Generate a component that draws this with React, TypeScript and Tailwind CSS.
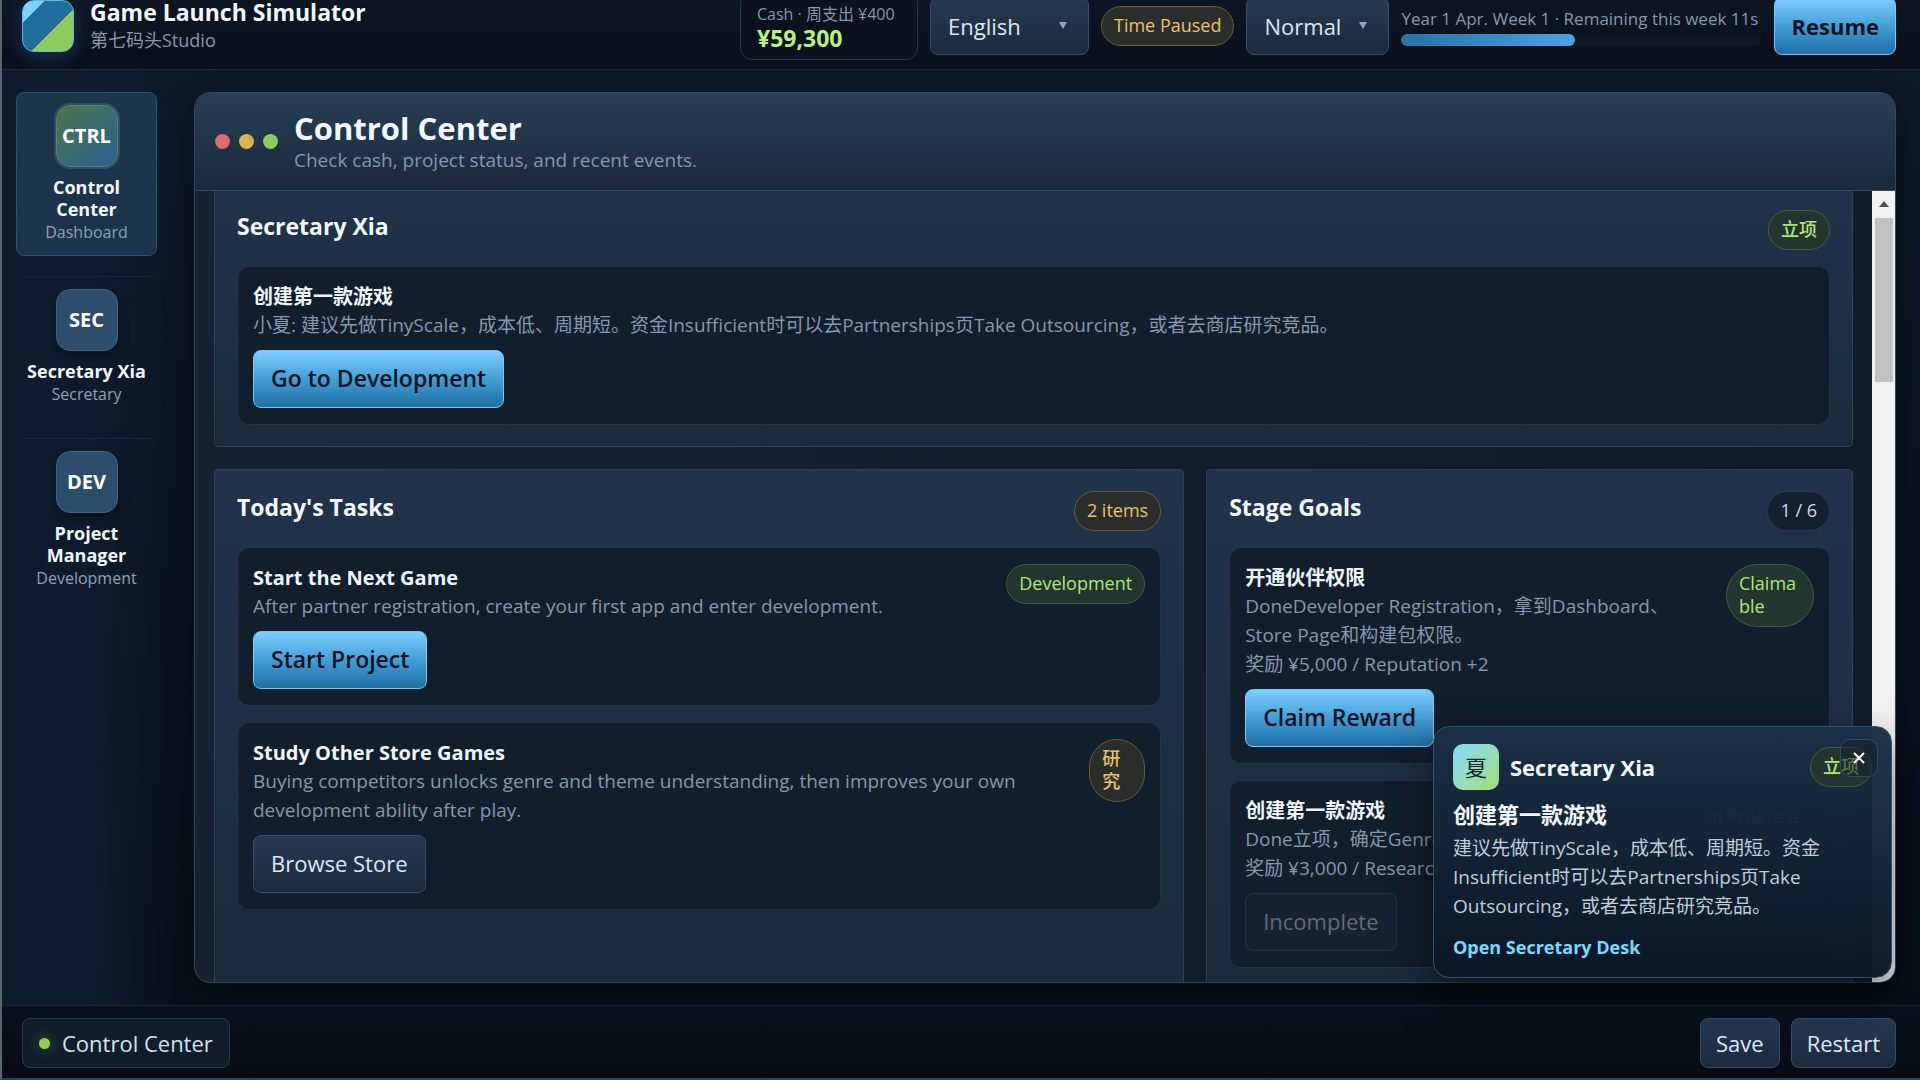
import { useState } from "react"
import type { ReactNode } from "react"
import clsx from "clsx"

type Tone = "green" | "amber" | "plain"

const toneClasses: Record<Tone, string> = {
    green: "border-[#40603f] bg-[#22362f] text-[#b0e67c]",
    amber: "border-[#6b5a37] bg-[#2b2d2b] text-[#e7c46c]",
    plain: "border-[#2c3b4b] bg-[#132030] text-[#cfdbe8]",
}

const navItems = [
    { id: "ctrl", code: "CTRL", title: "Control Center", role: "Dashboard" },
    { id: "sec", code: "SEC", title: "Secretary Xia", role: "Secretary" },
    { id: "dev", code: "DEV", title: "Project Manager", role: "Development" },
]

const darkButton =
    "border border-[#33506b] bg-linear-to-b from-[#273a50] to-[#1b2a3c] text-[#dce8f5]"

const primaryButton =
    "border border-[#7cc6f2] bg-linear-to-b from-[#7dcfff] via-[#429fd6] to-[#1f6fa3] text-[#06121f]"

function Pill({ tone, className, children }: { tone: Tone; className?: string; children: ReactNode }) {
    return (
        <span
            className={clsx(
                "shrink-0 rounded-full border px-3 pt-[7px] pb-2 text-[18px] leading-[23px] font-medium",
                toneClasses[tone],
                className
            )}
        >
            {children}
        </span>
    )
}

function ActionButton({ primary, disabled, children }: { primary?: boolean; disabled?: boolean; children: ReactNode }) {
    return (
        <button
            disabled={disabled}
            className={clsx(
                "mt-[10px] block h-[58px] rounded-lg px-[17px] pb-[2px]",
                primary && primaryButton,
                primary ? "text-[23px] font-semibold" : "text-[22px]",
                !primary && !disabled && darkButton,
                disabled && "border border-[#253443] bg-[#162230] text-[#5f6c7a]"
            )}
        >
            {children}
        </button>
    )
}

function Card({ title, pill, action, children }: { title: string; pill?: ReactNode; action: ReactNode; children: ReactNode }) {
    return (
        <article className="flex items-start justify-between gap-12 rounded-xl border border-[#223343] bg-[#111e2b] px-[15px] py-4">
            <div>
                <h3 className="text-[20px] leading-7 font-bold text-[#eef5fd]">{title}</h3>
                <div className="text-[19px] leading-[29px] text-[#8598ad]">{children}</div>
                {action}
            </div>
            {pill}
        </article>
    )
}

function Panel({ title, pill, children }: { title: string; pill: ReactNode; children: ReactNode }) {
    return (
        <section className="rounded-sm border border-[#2c4157] bg-linear-to-b from-[#20334a] to-[#1b2a3a] px-[22px] py-[21px]">
            <div className="mb-4 flex items-start justify-between">
                <h2 className="text-[23px] leading-8 font-bold text-[#f2f8ff]">{title}</h2>
                {pill}
            </div>
            <div className="space-y-4">{children}</div>
        </section>
    )
}

function HeaderSelect({ label, options, className }: { label: string; options: string[]; className: string }) {
    return (
        <div className={clsx("relative", className)}>
            <select
                aria-label={label}
                className={clsx("h-[58px] w-full appearance-none rounded-lg pl-[17px] text-[22px]", darkButton)}
            >
                {options.map((option) => (
                    <option key={option}>{option}</option>
                ))}
            </select>
            <svg viewBox="0 0 8 7" className="pointer-events-none absolute top-[25px] right-[22px] h-[7px] w-2 fill-[#93a6b9]">
                <path d="M0 0h8L4 7z" />
            </svg>
        </div>
    )
}

function SecretaryPopup({ onClose }: { onClose: () => void }) {
    return (
        <aside className="absolute right-7 bottom-[100px] w-[459px] rounded-2xl border border-[#2c5573] bg-linear-to-b from-[#1a3045]/97 to-[#0a1724]/97 px-[19px] pt-[17px] pb-4 shadow-[0_18px_40px_rgba(0,0,0,0.5)]">
            <div className="flex items-center gap-[11px]">
                <div className="flex size-[46px] items-center justify-center rounded-[10px] bg-linear-to-br from-[#86dcff] to-[#a5dc6d] text-[22px] text-[#0b2233]">
                    夏
                </div>
                <h2 className="flex-1 text-[22px] leading-8 font-bold text-[#f2f8ff]">Secretary Xia</h2>
                <Pill tone="green">立项</Pill>
            </div>
            <button
                aria-label="Close"
                onClick={onClose}
                className="absolute top-3 right-[13px] flex size-[38px] items-center justify-center rounded-[10px] border border-[#34495c] bg-[#14222f]/60 text-white"
            >
                <svg viewBox="0 0 12 12" className="size-3 stroke-current stroke-2">
                    <path d="M1 1l10 10M11 1L1 11" />
                </svg>
            </button>
            <h3 className="mt-2 text-[22px] leading-8 font-bold text-[#f2f8ff]">创建第一款游戏</h3>
            <p className="mt-1 text-[19px] leading-[29px] text-[#c0ceda]">
                建议先做TinyScale，成本低、周期短。资金Insufficient时可以去Partnerships页Take Outsourcing，或者去商店研究竞品。
            </p>
            <a href="#secretary" className="mt-3 inline-block text-[18px] leading-7 font-bold text-[#74dcff]">
                Open Secretary Desk
            </a>
        </aside>
    )
}

export default function App() {
    const [active, setActive] = useState("ctrl")
    const [popupOpen, setPopupOpen] = useState(true)

    return (
        <div className="relative flex h-screen flex-col overflow-hidden border-b-2 border-l-2 border-b-[#24435a] border-l-[#59656f] bg-[#0a1420] font-['Open_Sans','Noto_Sans_CJK_SC',sans-serif]">
            <header className="-mt-4 flex h-[86px] shrink-0 items-center gap-3 border-b border-[#1d2c39] bg-linear-to-b from-[#0d1826] to-[#090f1b] pr-6 pb-px pl-5">
                <div className="size-[52px] shrink-0 rounded-xl border border-[#6fb2dc] bg-[linear-gradient(135deg,#74d7ff_0_22%,#216d9f_22%_59%,#90cc5c_59%)] shadow-[0_4px_18px_rgba(50,120,200,0.35)]" />
                <div className="ml-1 flex-1">
                    <h1 className="text-[23px] leading-7 font-bold text-[#f2f8ff]">Game Launch Simulator</h1>
                    <p className="text-[18px] leading-7 text-[#8598ad]">第七码头Studio</p>
                </div>

                <div className="h-[68px] w-[178px] shrink-0 rounded-xl border border-[#1f3a4f] bg-[#09121e] px-4 pt-[9px]">
                    <p className="text-[16px] leading-6 whitespace-nowrap text-[#8598ad]">Cash · 周支出 ¥400</p>
                    <p className="text-[23px] leading-6 font-bold text-[#b9f27c]">¥59,300</p>
                </div>
                <HeaderSelect label="Language" options={["English", "中文"]} className="w-[159px]" />
                <Pill tone="amber">Time Paused</Pill>
                <HeaderSelect label="Speed" options={["Normal", "Fast"]} className="w-[143px]" />
                <div className="w-[361px]">
                    <p className="text-[17px] leading-6 whitespace-nowrap text-[#8598ad]">
                        Year 1 Apr. Week 1 · Remaining this week 11s
                    </p>
                    <div className="mt-[3px] h-3 rounded-full bg-[#0d1723]">
                        <div className="h-3 rounded-full bg-linear-to-r from-[#2473a6] to-[#4ba3e3]" style={{ width: "48%" }} />
                    </div>
                </div>
                <button className={clsx("h-[58px] rounded-lg px-4 text-[22px] font-bold", primaryButton)}>Resume</button>
            </header>

            <div className="flex min-h-0 flex-1 bg-linear-to-b from-[#0c1926] to-[#07101a]">
                <nav className="w-[174px] shrink-0 bg-linear-to-r from-[#0d1b2c] via-[#0d1b2c] to-transparent py-[22px] pl-[14px]">
                    <div className="flex w-[141px] flex-col gap-5">
                        {navItems.map((item) => (
                            <button
                                key={item.id}
                                onClick={() => setActive(item.id)}
                                className={clsx(
                                    "flex flex-col items-center rounded-lg border py-3",
                                    active === item.id
                                        ? "border-[#2b5570] bg-linear-to-b from-[#1b3549] to-[#1c334c]"
                                        : "border-transparent border-t-[#16263a]"
                                )}
                            >
                                <span
                                    className={clsx(
                                        "flex size-[62px] items-center justify-center rounded-[14px] border text-[20px] font-bold text-white",
                                        active === item.id
                                            ? "border-[#5c8262] bg-linear-to-br from-[#4f7448] to-[#2b5f90] shadow-[0_0_0_2px_#2b4f73]"
                                            : "border-[#44617f] bg-[#2c4d6c] shadow-[0_6px_12px_rgba(0,0,0,0.3)]"
                                    )}
                                >
                                    {item.code}
                                </span>
                                <span className="mt-[9px] px-2 text-[18px] leading-[22px] font-bold text-[#f2f8ff]">{item.title}</span>
                                <span className="mt-px text-[16px] leading-[22px] text-[#8fa2b6]">{item.role}</span>
                            </button>
                        ))}
                    </div>
                </nav>

                <main className="mt-[22px] mr-6 mb-[22px] ml-[18px] flex min-w-0 flex-1 flex-col overflow-hidden rounded-2xl border border-[#34495e] bg-linear-to-r from-[#15222f] to-[#101c28] shadow-[0_10px_30px_rgba(0,0,0,0.4)]">
                    <div className="flex h-[98px] shrink-0 items-center gap-4 border-b border-[#34495e] bg-linear-to-b from-[#293f55] via-[#213448] to-[#1a2938] px-5">
                        <div className="flex gap-[9px]">
                            <span className="size-[15px] rounded-full bg-[#dd6b70]" />
                            <span className="size-[15px] rounded-full bg-[#dbb156]" />
                            <span className="size-[15px] rounded-full bg-[#8fce5a]" />
                        </div>
                        <div>
                            <h1 className="text-[31px] leading-9 font-bold text-[#f2f8ff]">Control Center</h1>
                            <p className="text-[19px] leading-7 text-[#8598ad]">Check cash, project status, and recent events.</p>
                        </div>
                    </div>

                    <div className="flex min-h-0 flex-1 overflow-hidden">
                        <div className="-mt-[3px] flex min-w-0 flex-1 flex-col gap-[22px] px-[19px]">
                            <Panel title="Secretary Xia" pill={<Pill tone="green">立项</Pill>}>
                                <Card title="创建第一款游戏" action={<ActionButton primary>Go to Development</ActionButton>}>
                                    小夏: 建议先做TinyScale，成本低、周期短。资金Insufficient时可以去Partnerships页Take Outsourcing，或者去商店研究竞品。
                                </Card>
                            </Panel>

                            <div className="grid flex-1 grid-cols-[3fr_2fr] gap-[22px]">
                                <Panel title="Today's Tasks" pill={<Pill tone="amber">2 items</Pill>}>
                                    <Card
                                        title="Start the Next Game"
                                        pill={<Pill tone="green">Development</Pill>}
                                        action={<ActionButton primary>Start Project</ActionButton>}
                                    >
                                        After partner registration, create your first app and enter development.
                                    </Card>
                                    <Card
                                        title="Study Other Store Games"
                                        pill={<Pill tone="amber" className="w-14">研究</Pill>}
                                        action={<ActionButton>Browse Store</ActionButton>}
                                    >
                                        Buying competitors unlocks genre and theme understanding, then improves your own development
                                        ability after play.
                                    </Card>
                                </Panel>

                                <Panel title="Stage Goals" pill={<Pill tone="plain">1 / 6</Pill>}>
                                    <Card
                                        title="开通伙伴权限"
                                        pill={<Pill tone="green" className="w-[88px] break-all">Claimable</Pill>}
                                        action={<ActionButton primary>Claim Reward</ActionButton>}
                                    >
                                        <p>DoneDeveloper Registration，拿到Dashboard、Store Page和构建包权限。</p>
                                        <p>奖励 ¥5,000 / Reputation +2</p>
                                    </Card>
                                    <Card
                                        title="创建第一款游戏"
                                        pill={<Pill tone="plain">In Progress</Pill>}
                                        action={<ActionButton disabled>Incomplete</ActionButton>}
                                    >
                                        <p>Done立项，确定Genre、Theme。</p>
                                        <p>奖励 ¥3,000 / Research +1</p>
                                    </Card>
                                </Panel>
                            </div>
                        </div>

                        <div className="flex w-[23px] shrink-0 flex-col items-center bg-[#f1f1f1]">
                            <svg viewBox="0 0 10 6" className="mt-[10px] h-[6px] w-[10px] fill-[#505050]">
                                <path d="M5 0l5 6H0z" />
                            </svg>
                            <div className="mt-[11px] h-[164px] w-[18px] bg-[#c1c1c1]" />
                        </div>
                    </div>
                </main>
            </div>

            <footer className="flex h-[73px] shrink-0 items-center gap-[11px] border-t border-[#1a2733] bg-linear-to-b from-[#09111c] to-[#060c15] pt-[2px] pr-6 pl-5">
                <button className="flex h-[50px] items-center gap-3 rounded-lg border border-[#223e50] bg-[#101e2b] px-4 text-[22px] text-[#d5e2ee]">
                    <span className="size-[11px] rounded-full bg-[#90cf5a] shadow-[0_0_14px_#90cf5a66]" />
                    Control Center
                </button>
                <div className="flex-1" />
                <button className={clsx("h-[50px] rounded-lg px-[15px] text-[22px]", darkButton)}>Save</button>
                <button className={clsx("h-[50px] rounded-lg px-[15px] text-[22px]", darkButton)}>Restart</button>
            </footer>

            {popupOpen && <SecretaryPopup onClose={() => setPopupOpen(false)} />}
        </div>
    )
}
